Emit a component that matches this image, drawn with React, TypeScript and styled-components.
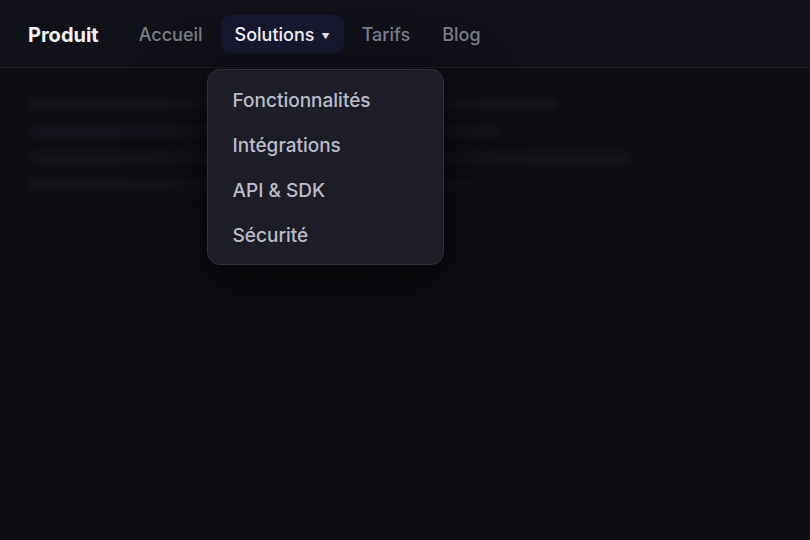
import React from "react";
import styled, { createGlobalStyle } from "styled-components";

const GlobalStyle = createGlobalStyle`
  html, body {
    margin: 0;
    padding: 0;
    background: #0e0f14;
    font-family: Inter, "Noto Sans", "Liberation Sans", sans-serif;
    -webkit-font-smoothing: antialiased;
  }
`;

const Page = styled.div`
  width: 810px;
  height: 540px;
  background: #0e0f14;
  overflow: hidden;
`;

const NavBar = styled.nav`
  height: 67px;
  display: flex;
  align-items: center;
  padding: 0 28px;
  background: #101119;
  border-bottom: 1px solid #1c1d26;
  position: relative;
  z-index: 2;
`;

const Brand = styled.div`
  font-size: 20px;
  font-weight: 700;
  color: #f4f4f6;
  margin-right: 26px;
  padding-top: 2px;
`;

const Links = styled.ul`
  display: flex;
  align-items: center;
  gap: 4px;
  margin: 0;
  padding: 0;
  list-style: none;
`;

const LinkItem = styled.li<{ $active?: boolean }>`
  position: relative;
  display: flex;
  align-items: center;
  gap: 7px;
  height: 38px;
  box-sizing: border-box;
  padding: 2px 14px 0;
  border-radius: 9px;
  font-size: 18px;
  font-weight: 500;
  color: ${(p) => (p.$active ? "#f2f2f6" : "#7c7d87")};
  background: ${(p) => (p.$active ? "#171830" : "transparent")};
  cursor: pointer;
`;

const Caret = styled.span`
  font-size: 8px;
  color: #e6e6ee;
  margin-top: 3px;
`;

const Menu = styled.div`
  position: absolute;
  top: 54px;
  left: -14px;
  width: 235px;
  padding: 8px 0 6px;
  background: #1c1d27;
  border: 1px solid #30313c;
  border-radius: 13px;
  box-shadow: 0 28px 70px rgba(0, 0, 0, 0.55), 0 8px 20px rgba(0, 0, 0, 0.35);
  cursor: default;
`;

const MenuItem = styled.div`
  height: 45px;
  display: flex;
  align-items: center;
  padding: 0 25px;
  font-size: 19px;
  font-weight: 500;
  color: #bbbcca;
`;

const Content = styled.main`
  padding: 30px 30px 0;
  display: flex;
  flex-direction: column;
  gap: 15px;
  filter: blur(3px);
`;

const Skeleton = styled.div<{ $w: number }>`
  width: ${(p) => p.$w}px;
  height: 12px;
  border-radius: 4px;
  background: #14151d;
`;

const links = ["Accueil", "Solutions", "Tarifs", "Blog"];
const menu = ["Fonctionnalités", "Intégrations", "API & SDK", "Sécurité"];
const lines = [528, 470, 600, 440];

export default function App() {
  return (
    <Page>
      <GlobalStyle />
      <NavBar>
        <Brand>Produit</Brand>
        <Links>
          {links.map((l) =>
            l === "Solutions" ? (
              <LinkItem key={l} $active>
                {l}
                <Caret>▼</Caret>
                <Menu>
                  {menu.map((m) => (
                    <MenuItem key={m}>{m}</MenuItem>
                  ))}
                </Menu>
              </LinkItem>
            ) : (
              <LinkItem key={l}>{l}</LinkItem>
            )
          )}
        </Links>
      </NavBar>
      <Content>
        {lines.map((w, i) => (
          <Skeleton key={i} $w={w} />
        ))}
      </Content>
    </Page>
  );
}
